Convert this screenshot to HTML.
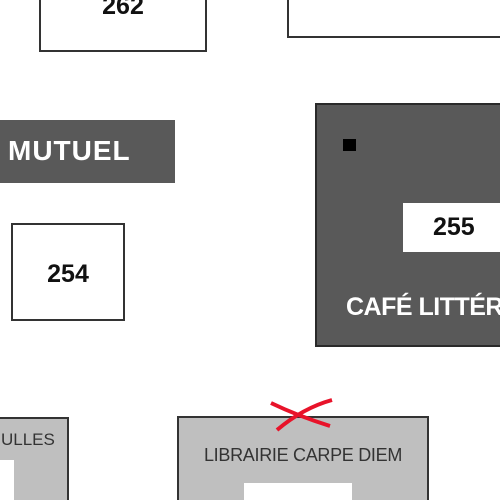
<!DOCTYPE html>
<html><head><style>
html,body{margin:0;width:500px;height:500px;overflow:hidden;background:#fff;position:relative;font-family:"Liberation Sans",sans-serif}
div{position:absolute;box-sizing:border-box}
.b{border:2px solid #333}
.t{font-weight:bold;color:#111;text-align:center}
</style></head><body>
<div class="b" style="left:39px;top:-20px;width:168px;height:72px;background:#fff"></div>
<div class="t" style="left:39px;top:-8px;width:168px;font-size:25px">262</div>
<div class="b" style="left:287px;top:-20px;width:240px;height:58px;background:#fff"></div>
<div style="left:0;top:120px;width:175px;height:63px;background:#595959"></div>
<div style="left:8px;top:135px;color:#fff;font-weight:bold;font-size:28px;letter-spacing:1px">MUTUEL</div>
<div class="b" style="left:11px;top:223px;width:114px;height:98px;background:#fff"></div>
<div class="t" style="left:11px;top:260px;width:114px;font-size:25px">254</div>
<div style="left:315px;top:103px;width:200px;height:244px;background:#595959;border:2px solid #2a2a2a"></div>
<div style="left:343px;top:139px;width:13px;height:12px;background:#000"></div>
<div style="left:403px;top:203px;width:110px;height:49px;background:#fff"></div>
<div class="t" style="left:403px;top:213px;width:110px;font-size:25px;text-align:left;padding-left:30px">255</div>
<div style="left:346px;top:293px;color:#fff;font-weight:bold;font-size:25px;white-space:nowrap;letter-spacing:-0.5px">CAFÉ LITTÉR</div>
<div style="left:-10px;top:417px;width:79px;height:100px;background:#bfbfbf;border:2px solid #333"></div>
<div style="left:1px;top:430px;font-size:17px;color:#333">ULLES</div>
<div style="left:0;top:460px;width:14px;height:40px;background:#fff"></div>
<div style="left:177px;top:416px;width:252px;height:100px;background:#bfbfbf;border:2px solid #333"></div>
<div style="left:177px;top:445px;width:252px;text-align:center;font-size:18px;color:#333;white-space:nowrap;letter-spacing:-0.3px">LIBRAIRIE CARPE DIEM</div>
<div style="left:244px;top:483px;width:108px;height:30px;background:#fff"></div>
<svg style="position:absolute;left:268px;top:396px" width="68" height="40"><path d="M3 7 Q30 20 62 30" stroke="#e8132a" stroke-width="4" fill="none"/><path d="M64 4 Q35 12 9 34" stroke="#e8132a" stroke-width="4" fill="none"/></svg>
</body></html>
